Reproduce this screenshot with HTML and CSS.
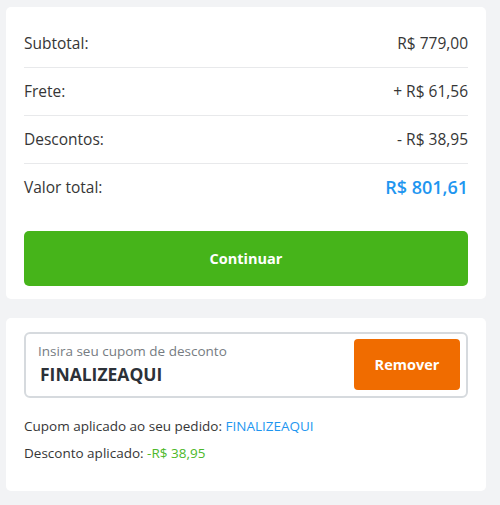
FILE: index.html
```html
<!DOCTYPE html>
<html lang="pt-BR">
  <head>
    <meta charset="UTF-8" />
    <meta name="viewport" content="width=device-width, initial-scale=1.0" />
    <title>Resumo do pedido</title>
    <link rel="stylesheet" href="styles.css">
  </head>
  <body>
    <!-- resumo de valores -->
    <div class="card summary">
      <div class="row">
        <span>Subtotal:</span>
        <span>R$ 779,00</span>
      </div>
      <div class="row">
        <span>Frete:</span>
        <span>+ R$ 61,56</span>
      </div>
      <div class="row">
        <span>Descontos:</span>
        <span>- R$ 38,95</span>
      </div>
      <div class="row total">
        <span>Valor total:</span>
        <span class="total-value">R$ 801,61</span>
      </div>
      <button class="btn-continue">Continuar</button>
    </div>

    <!-- cupom -->
    <div class="card coupon">
      <div class="coupon-box">
        <div class="coupon-field">
          <label for="coupon">Insira seu cupom de desconto</label>
          <input type="text" id="coupon" value="FINALIZEAQUI" />
        </div>
        <button class="btn-remove">Remover</button>
      </div>
      <p class="info">Cupom aplicado ao seu pedido: <span class="blue">FINALIZEAQUI</span></p>
      <p class="info">Desconto aplicado: <span class="green">-R$ 38,95</span></p>
    </div>
  </body>
</html>
```

FILE: styles.css
```css
body{
  margin: 0;
  padding: 7px 14px 0 6px;
  background-color: #f2f3f5;
  font-family: "Open Sans", "Noto Sans", sans-serif;
  color: #363636;
}
.card{
  background-color: #fff;
  border-radius: 5px;
}
/* resumo */
.summary{
  padding: 13px 18px 13px 18px;
}
.row{
  display: flex;
  justify-content: space-between;
  align-items: center;
  padding: 15px 0;
  font-size: 15.5px;
  line-height: 17px;
  border-bottom: 1px solid #e8e9eb;
}
.row.total{
  border-bottom: none;
  padding: 10px 0 20px;
  line-height: 27px;
}
.total-value{
  color: #1e96f0;
  font-size: 18px;
  font-weight: 600;
}
.btn-continue{
  display: block;
  width: 100%;
  height: 55px;
  margin-top: 10px;
  border: none;
  border-radius: 5px;
  background-color: #46b41a;
  color: #fff;
  font-family: inherit;
  font-size: 14.5px;
  font-weight: 700;
  cursor: pointer;
}
/* cupom */
.coupon{
  margin-top: 19px;
  padding: 14px 18px 24px;
}
.coupon-box{
  display: flex;
  align-items: flex-start;
  padding: 5px 6px 6px 12px;
  border: 2px solid #d6dade;
  border-radius: 6px;
}
.coupon-field{
  flex: 1;
  display: flex;
  flex-direction: column;
  padding-top: 4px;
}
.coupon-field label{
  font-size: 13.5px;
  line-height: 17px;
  color: #767c82;
}
.coupon-field input{
  border: none;
  padding: 0 0 0 2px;
  margin-top: 2px;
  font-family: inherit;
  font-size: 17.5px;
  font-weight: 700;
  color: #2c3138;
  outline: none;
}
.btn-remove{
  width: 106px;
  height: 51px;
  border: none;
  border-radius: 4px;
  background-color: #f06c00;
  color: #fff;
  font-family: inherit;
  font-size: 14.5px;
  font-weight: 700;
  cursor: pointer;
}
.info{
  margin: 0;
  font-size: 13.5px;
  line-height: 27px;
}
.coupon-box + .info{
  margin-top: 15px;
}
.blue{
  color: #1e96f0;
}
.green{
  color: #4cb82a;
}
```
